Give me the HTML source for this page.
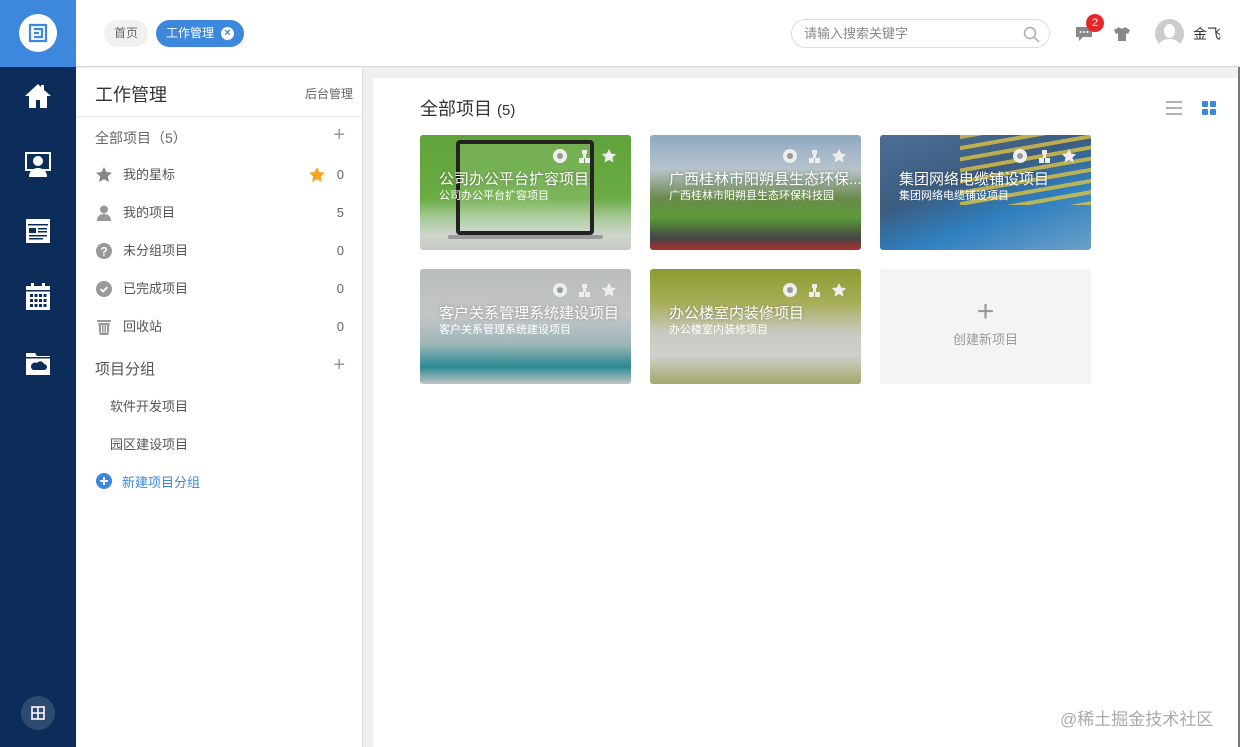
<!DOCTYPE html>
<html><head><meta charset="utf-8"><style>
*{margin:0;padding:0;box-sizing:border-box}
body{width:1240px;height:747px;overflow:hidden;background:#f0f0f0;font-family:"Liberation Sans","Noto Sans CJK SC",sans-serif;position:relative;color:#333}
.abs{position:absolute}
#nav{left:0;top:0;width:76px;height:747px;background:#0c2d5a}
#logo{left:0;top:0;width:76px;height:67px;background:#3d87dd}
#hdr{left:76px;top:0;width:1164px;height:67px;background:#fff;border-bottom:1px solid #d6d6d6}
#side{left:76px;top:68px;width:287px;height:679px;background:#fff;border-right:1px solid #ddd}
#main{left:373px;top:78px;width:865px;height:669px;background:#fff}
.tab{top:20px;height:27px;border-radius:14px;font-size:12px;line-height:27px;padding:0 10px}
.item{left:0;width:287px;height:38px;font-size:13px;color:#555;line-height:38px}
.item .ic{position:absolute;left:20px;top:11px;width:16px;height:16px}
.item .t{position:absolute;left:47px}
.item .n{position:absolute;right:19px;color:#666}
.card{width:211px;height:115px;border-radius:3px;overflow:hidden}
.card .t1{position:absolute;left:19px;top:33px;color:#fff;font-size:15px;white-space:nowrap;text-shadow:0 0 3px rgba(0,0,0,.3)}
.card .t2{position:absolute;left:19px;top:52px;color:#fff;font-size:11px;white-space:nowrap}
</style></head><body>
<div id="nav" class="abs"></div>
<div id="logo" class="abs"><div class="abs" style="left:19px;top:14px;width:38px;height:38px;border-radius:50%;background:#fff"><svg class="abs" style="left:9px;top:9px" width="20" height="20" viewBox="0 0 20 20" fill="none" stroke="#3d87dd" stroke-width="2.2"><path d="M2 2h16v16H2zM6 6h8v8H6M6 10h5"/></svg></div></div>
<svg class="abs" style="left:24px;top:82px" width="28" height="28" viewBox="0 0 28 28" fill="#fff"><path d="M14 2L1 14h4v12h7v-8h4v8h7V14h4L20 8V3h-3v2z"/></svg>
<svg class="abs" style="left:24px;top:150px" width="28" height="28" viewBox="0 0 28 28"><rect x="1" y="2" width="26" height="19" fill="#fff"/><rect x="3" y="4" width="22" height="15" fill="#0c2d5a"/><circle cx="14" cy="11" r="5" fill="#fff"/><path d="M5 27c0-6 4-9 9-9s9 3 9 9z" fill="#fff"/></svg>
<svg class="abs" style="left:25px;top:218px" width="26" height="26" viewBox="0 0 26 26"><rect x="1" y="1" width="24" height="24" fill="#fff"/><rect x="3" y="6" width="20" height="1.5" fill="#0c2d5a"/><rect x="4" y="10" width="7" height="5" fill="#0c2d5a"/><rect x="13" y="10" width="9" height="1.5" fill="#0c2d5a"/><rect x="13" y="13" width="9" height="1.5" fill="#0c2d5a"/><rect x="4" y="17" width="18" height="1.5" fill="#0c2d5a"/><rect x="4" y="20" width="14" height="1.5" fill="#0c2d5a"/></svg>
<svg class="abs" style="left:25px;top:283px" width="26" height="28" viewBox="0 0 26 28"><rect x="1" y="3" width="24" height="24" fill="#fff"/><rect x="6" y="0" width="3" height="6" fill="#fff"/><rect x="17" y="0" width="3" height="6" fill="#fff"/><rect x="1" y="7" width="24" height="1.5" fill="#0c2d5a"/><g fill="#0c2d5a"><rect x="5" y="11" width="3" height="3"/><rect x="9.5" y="11" width="3" height="3"/><rect x="14" y="11" width="3" height="3"/><rect x="18.5" y="11" width="3" height="3"/><rect x="5" y="16" width="3" height="3"/><rect x="9.5" y="16" width="3" height="3"/><rect x="14" y="16" width="3" height="3"/><rect x="18.5" y="16" width="3" height="3"/><rect x="5" y="21" width="3" height="3"/><rect x="9.5" y="21" width="3" height="3"/><rect x="14" y="21" width="3" height="3"/><rect x="18.5" y="21" width="3" height="3"/></g></svg>
<svg class="abs" style="left:25px;top:352px" width="26" height="24" viewBox="0 0 26 24"><path d="M1 1h9l2 3h13v19H1z" fill="#fff"/><rect x="1" y="5" width="24" height="1.5" fill="#0c2d5a"/><path d="M8 18h11a3 3 0 0 0 0-6 4 4 0 0 0-7-1 3 3 0 0 0-4 7z" fill="#0c2d5a"/></svg>
<div class="abs" style="left:21px;top:696px;width:34px;height:34px;border-radius:50%;background:#2f4a70"><svg class="abs" style="left:10px;top:10px" width="14" height="14" viewBox="0 0 14 14" fill="none" stroke="#fff" stroke-width="1.6"><rect x="1" y="1" width="12" height="12"/><path d="M7 1v12M1 7h12"/></svg></div>

<div id="hdr" class="abs">
 <div class="abs tab" style="left:28px;background:#f1f1f1;color:#666">首页</div>
 <div class="abs tab" style="left:80px;background:#3d87dd;color:#fff;padding-right:30px">工作管理<span class="abs" style="right:10px;top:7px;width:13px;height:13px;border-radius:50%;background:#fff;color:#3d87dd;font-size:11px;line-height:13px;text-align:center;font-weight:bold">×</span></div>
 <div class="abs" style="left:715px;top:19px;width:259px;height:29px;border:1px solid #ddd;border-radius:15px;font-size:13px;color:#888;line-height:27px;padding-left:12px">请输入搜索关键字
  <svg class="abs" style="right:9px;top:6px" width="17" height="17" viewBox="0 0 17 17" fill="none" stroke="#aaa" stroke-width="1.5"><circle cx="7" cy="7" r="5.5"/><path d="M11 11l5 5"/></svg></div>
 <svg class="abs" style="left:999px;top:26px" width="18" height="16" viewBox="0 0 18 16"><path d="M1 1h16v10H8l-4 4v-4H1z" fill="#888"/><g fill="#fff"><circle cx="5.5" cy="6" r="1"/><circle cx="9" cy="6" r="1"/><circle cx="12.5" cy="6" r="1"/></g></svg>
 <div class="abs" style="left:1010px;top:14px;width:18px;height:18px;border-radius:50%;background:#e8262a;color:#fff;font-size:11px;text-align:center;line-height:18px">2</div>
 <svg class="abs" style="left:1038px;top:27px" width="16" height="14" viewBox="0 0 16 14"><path d="M5 0L0 3l2 4 2-1v8h8V6l2 1 2-4-5-3c-1 2-5 2-6 0z" fill="#888"/></svg>
 <div class="abs" style="left:1079px;top:19px;width:29px;height:29px;border-radius:50%;background:#ccc;overflow:hidden"><div class="abs" style="left:9px;top:5px;width:11px;height:14px;border-radius:50%;background:#fff"></div><div class="abs" style="left:4px;top:20px;width:21px;height:14px;border-radius:50%;background:#fff"></div></div>
 <div class="abs" style="left:1117px;top:24px;font-size:14px;color:#333">金飞</div>
</div>
<div class="abs" style="left:1238px;top:67px;width:2px;height:680px;background:#777"></div>

<div id="side" class="abs">
 <div class="abs" style="left:19px;top:13px;font-size:18px;color:#333">工作管理</div>
 <div class="abs" style="right:9px;top:17px;font-size:12px;color:#666">后台管理</div>
 <div class="abs" style="left:0;top:48px;width:287px;height:1px;background:#e5e5e5"></div>
 <div class="abs" style="left:19px;top:60px;font-size:14px;color:#666">全部项目（5）</div>
 <div class="abs" style="right:17px;top:56px;font-size:20px;color:#999;font-weight:300">+</div>
 <div class="abs item" style="top:88px"><svg class="ic" viewBox="0 0 16 16"><path d="M8 0l2.4 5 5.6.6-4.2 3.8 1.2 5.6L8 12.2 3 15l1.2-5.6L0 5.6 5.6 5z" fill="#888"/></svg><span class="t">我的星标</span><svg class="abs" style="left:233px;top:11px" width="16" height="16" viewBox="0 0 16 16"><path d="M8 0l2.4 5 5.6.6-4.2 3.8 1.2 5.6L8 12.2 3 15l1.2-5.6L0 5.6 5.6 5z" fill="#f5a623"/></svg><span class="n">0</span></div>
 <div class="abs item" style="top:126px"><svg class="ic" viewBox="0 0 16 16" fill="#999"><circle cx="8" cy="4.5" r="4"/><path d="M1 16c0-5 3-7 7-7s7 2 7 7z"/></svg><span class="t">我的项目</span><span class="n">5</span></div>
 <div class="abs item" style="top:164px"><svg class="ic" viewBox="0 0 16 16"><circle cx="8" cy="8" r="8" fill="#999"/><text x="8" y="12.5" font-size="12" fill="#fff" text-anchor="middle" font-weight="bold" font-family="Liberation Sans">?</text></svg><span class="t">未分组项目</span><span class="n">0</span></div>
 <div class="abs item" style="top:202px"><svg class="ic" viewBox="0 0 16 16"><circle cx="8" cy="8" r="8" fill="#999"/><path d="M4.5 8l2.5 2.5 4.5-4.5" stroke="#fff" stroke-width="1.8" fill="none"/></svg><span class="t">已完成项目</span><span class="n">0</span></div>
 <div class="abs item" style="top:240px"><svg class="ic" viewBox="0 0 16 16" fill="#999"><rect x="1" y="1" width="14" height="2"/><path d="M2.5 4h11l-1 12h-9z"/><g fill="#fff"><rect x="5" y="6" width="1" height="8"/><rect x="7.5" y="6" width="1" height="8"/><rect x="10" y="6" width="1" height="8"/></g></svg><span class="t">回收站</span><span class="n">0</span></div>
 <div class="abs" style="left:19px;top:290px;font-size:15px;color:#555">项目分组</div>
 <div class="abs" style="right:17px;top:286px;font-size:20px;color:#999">+</div>
 <div class="abs" style="left:34px;top:328px;font-size:13px;color:#555">软件开发项目</div>
 <div class="abs" style="left:34px;top:366px;font-size:13px;color:#555">园区建设项目</div>
 <svg class="abs" style="left:20px;top:405px" width="16" height="16" viewBox="0 0 16 16"><circle cx="8" cy="8" r="8" fill="#3d87dd"/><path d="M8 4v8M4 8h8" stroke="#fff" stroke-width="2"/></svg>
 <div class="abs" style="left:46px;top:404px;font-size:13px;color:#3d87dd">新建项目分组</div>
</div>

<div id="main" class="abs">
 <div class="abs" style="left:47px;top:17px;font-size:18px;color:#333">全部项目 <span style="font-size:15px">(5)</span></div>
 <svg class="abs" style="left:793px;top:23px" width="16" height="14" viewBox="0 0 16 14" stroke="#999" stroke-width="1.5"><path d="M0 1h16M0 7h16M0 13h16"/></svg>
 <svg class="abs" style="left:829px;top:23px" width="14" height="14" viewBox="0 0 14 14" fill="#3d87dd"><rect width="6" height="6" rx="1"/><rect x="8" width="6" height="6" rx="1"/><rect y="8" width="6" height="6" rx="1"/><rect x="8" y="8" width="6" height="6" rx="1"/></svg>
</div>

<div class="abs card" style="left:420px;top:135px;background:linear-gradient(180deg,#5fa33a 0%,#6aab44 55%,#a7c998 72%,#cfd6cc 88%,#c8c8c8 100%)">
 <div class="abs" style="left:36px;top:5px;width:138px;height:95px;border:4px solid #222;border-radius:4px;background:rgba(255,255,255,.12)"></div>
 <div class="abs" style="left:28px;top:100px;width:155px;height:4px;background:#999;border-radius:2px"></div>
 <div class="t1">公司办公平台扩容项目</div><div class="t2">公司办公平台扩容项目</div></div>
<div class="abs card" style="left:650px;top:135px;background:linear-gradient(180deg,#8ea9c2 0%,#b7c3cc 30%,#6a8a4a 55%,#5c9a38 72%,#444 90%,#b03030 100%)">
 <div class="t1">广西桂林市阳朔县生态环保...</div><div class="t2">广西桂林市阳朔县生态环保科技园</div></div>
<div class="abs card" style="left:880px;top:135px;background:linear-gradient(160deg,#4d6f96 0%,#3c5c80 40%,#2f7fbf 65%,#6ba0c8 100%)">
 <div class="abs" style="left:80px;top:0;width:131px;height:70px;background:repeating-linear-gradient(170deg,rgba(230,200,60,.75) 0 4px,transparent 4px 11px)"></div>
 <div class="t1">集团网络电缆铺设项目</div><div class="t2">集团网络电缆铺设项目</div></div>
<div class="abs card" style="left:420px;top:269px;background:linear-gradient(180deg,#b9bcbd 0%,#c3c6c7 40%,#9fb6b8 65%,#2c8a92 85%,#bfc3c4 100%)">
 <div class="t1">客户关系管理系统建设项目</div><div class="t2">客户关系管理系统建设项目</div></div>
<div class="abs card" style="left:650px;top:269px;background:linear-gradient(180deg,#8c9a30 0%,#a8ae5a 30%,#c8c9c0 55%,#d0d0cc 75%,#a3a86a 100%)">
 <div class="t1">办公楼室内装修项目</div><div class="t2">办公楼室内装修项目</div></div>
<div class="abs" style="left:880px;top:269px;width:211px;height:115px;background:#f4f4f4;border-radius:3px;text-align:center;color:#999">
 <div style="font-size:30px;line-height:30px;margin-top:28px;color:#999;font-weight:300">+</div>
 <div style="font-size:13px;margin-top:2px">创建新项目</div></div>

<svg width="0" height="0" style="position:absolute"><defs>
<g id="cic"><circle cx="7" cy="7" r="7" fill="#eee"/><circle cx="7" cy="7" r="3" fill="#999"/><g fill="#eee"><rect x="29" y="1" width="5" height="4"/><rect x="26" y="9" width="5" height="5"/><rect x="32" y="9" width="5" height="5"/><rect x="30" y="4" width="3" height="5"/></g><path d="M56 0l2.2 4.6 5 .5-3.7 3.4 1 5L56 11l-4.5 2.5 1-5L48.8 5l5-.5z" fill="#eee"/></g></defs></svg>
<svg class="abs" style="left:553px;top:149px" width="66" height="15"><use href="#cic"/></svg>
<svg class="abs" style="left:783px;top:149px" width="66" height="15"><use href="#cic"/></svg>
<svg class="abs" style="left:1013px;top:149px" width="66" height="15"><use href="#cic"/></svg>
<svg class="abs" style="left:553px;top:283px" width="66" height="15"><use href="#cic"/></svg>
<svg class="abs" style="left:783px;top:283px" width="66" height="15"><use href="#cic"/></svg>

<div class="abs" style="left:1060px;top:705px;font-size:17px;color:#aaa">@稀土掘金技术社区</div>
</body></html>
